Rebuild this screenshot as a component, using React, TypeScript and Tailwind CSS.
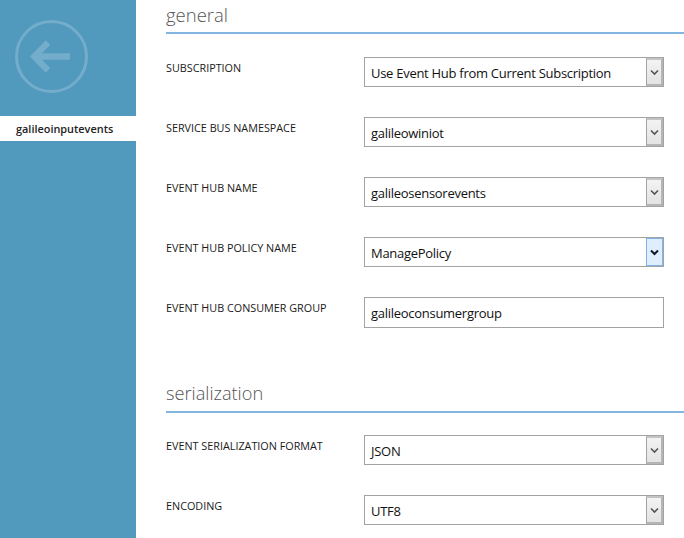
const FONT = "font-['Open_Sans','Noto_Sans',sans-serif]";

function Chevron({ dark }: { dark?: boolean }) {
  return (
    <svg width="9" height="7" viewBox="0 0 9 7" className="block">
      <path d="M1 1.5 L4.5 5 L8 1.5" fill="none" stroke={dark ? "#111827" : "#555555"} strokeWidth={dark ? 2 : 1.6} />
    </svg>
  );
}

function Select({ value, focused }: { value: string; focused?: boolean }) {
  return (
    <div className="flex h-[30px] w-[300px] border border-[#a3a3a3] bg-white">
      <span className="flex-1 pl-[6px] text-[13px] leading-[30px] text-[#111111] tracking-[-0.28px]">{value}</span>
      <span
        className={
          focused
            ? "flex w-[17px] items-center justify-center border-[1px] border-[#7eb4ea] bg-[#dfeefc]"
            : "flex w-[17px] items-center justify-center border-l border-[#a3a3a3] border-r-2 border-b-2 border-t-2 border-t-[#c4c4c4] border-r-[#b5b5b5] border-b-[#b5b5b5] bg-gradient-to-b from-[#f3f3f3] to-[#e3e3e3]"
        }
      >
        <Chevron dark={focused} />
      </span>
    </div>
  );
}

function Row({ label, children }: { label: string; children: React.ReactNode }) {
  return (
    <div className="flex h-[60px] items-start">
      <div className="w-[198px] pt-[3px] text-[10.8px] leading-[15px] text-[#1a1a1a]">{label}</div>
      {children}
    </div>
  );
}

function Heading({ title, small }: { title: string; small?: boolean }) {
  return (
    <div
      className={
        small
          ? "h-[36px] border-b-2 border-[#84b4e0] text-[18.2px] font-light leading-[32px] text-[#555555]"
          : "h-[36px] border-b-2 border-[#84b4e0] text-[18.5px] font-light leading-[34px] text-[#555555]"
      }
    >
      {title}
    </div>
  );
}

export default function App() {
  return (
    <div className={`flex h-[538px] w-[684px] overflow-hidden bg-white ${FONT}`}>
      <aside className="w-[136px] shrink-0 bg-[#5199bd]">
        <div className="flex h-[116px] items-start pl-[15px] pt-[20px]">
          <svg width="73" height="73" viewBox="0 0 73 73" className="block">
            <circle cx="36.5" cy="36.5" r="35" fill="none" stroke="#73adcb" strokeWidth="3" />
            <path d="M19 36.5 H55 M33 22.5 L19.5 36.5 L33 50.5" fill="none" stroke="#73adcb" strokeWidth="6.5" />
          </svg>
        </div>
        <div className="h-[25px] bg-white pl-[16px] text-[10.9px] font-semibold leading-[25px] text-[#222222]">
          galileoinputevents
        </div>
      </aside>
      <main className="flex-1 pl-[30px]">
        <div className="-mt-[2px]">
          <Heading title="general" />
        </div>
        <div className="mt-[23px]">
          <Row label="SUBSCRIPTION"><Select value="Use Event Hub from Current Subscription" /></Row>
          <Row label="SERVICE BUS NAMESPACE"><Select value="galileowiniot" /></Row>
          <Row label="EVENT HUB NAME"><Select value="galileosensorevents" /></Row>
          <Row label="EVENT HUB POLICY NAME"><Select value="ManagePolicy" focused /></Row>
          <Row label="EVENT HUB CONSUMER GROUP">
            <div className="h-[31px] w-[300px] border border-[#a3a3a3] bg-white pl-[6px] text-[13px] leading-[30px] text-[#111111] tracking-[-0.28px]">
              galileoconsumergroup
            </div>
          </Row>
        </div>
        <div className="mt-[20px]">
          <Heading title="serialization" small />
        </div>
        <div className="mt-[22px]">
          <Row label="EVENT SERIALIZATION FORMAT"><Select value="JSON" /></Row>
          <Row label="ENCODING"><Select value="UTF8" /></Row>
        </div>
      </main>
    </div>
  );
}
